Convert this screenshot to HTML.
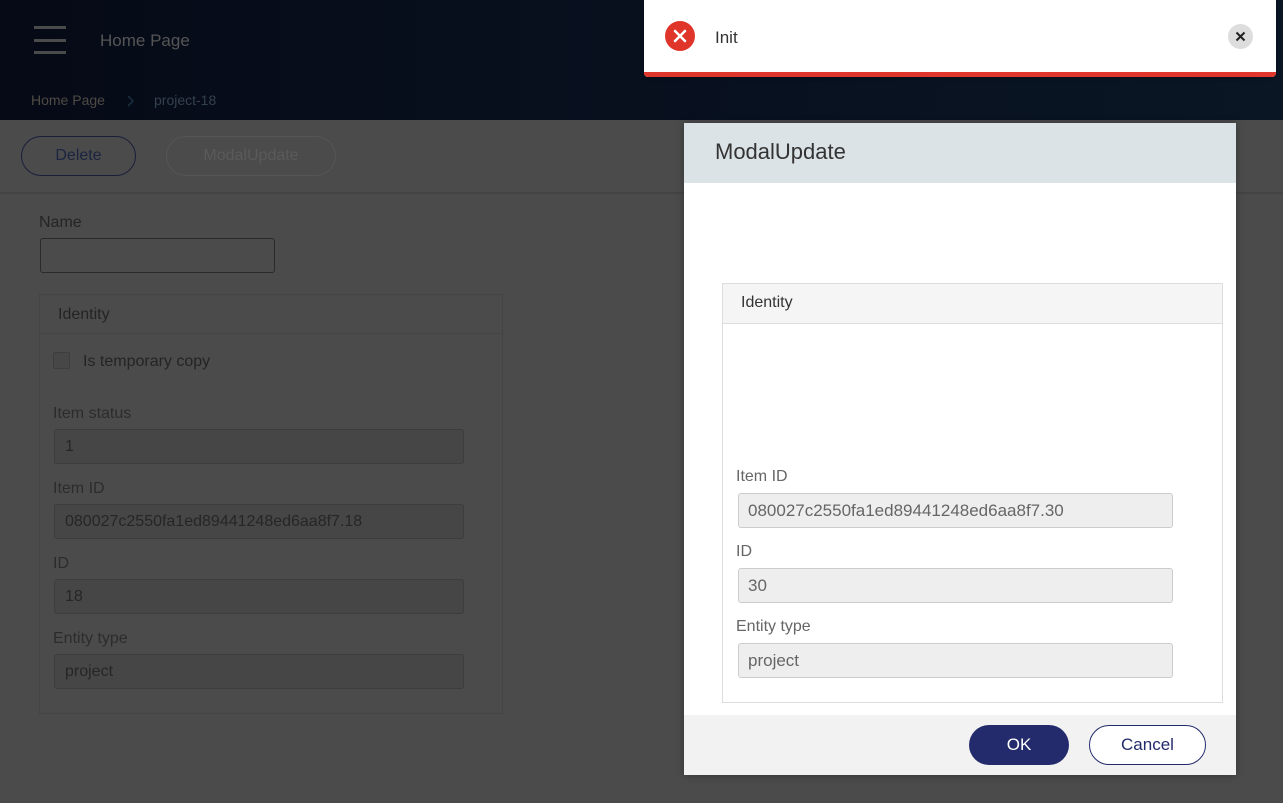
<!DOCTYPE html>
<html style="background:#4b4b4b"><head><meta charset="utf-8"><style>
*{box-sizing:border-box;margin:0;padding:0}
html,body{background:#4b4b4b}
body{width:1283px;height:803px;overflow:hidden;font-family:"Liberation Sans",sans-serif;position:relative}
.abs{position:absolute}
.hdr{left:0;top:0;width:1283px;height:120px;background:linear-gradient(90deg,#060a16,#081120 60%,#0a1624)}
.lbl{font-size:16px;color:#242424}
.inp{height:35px;border:1px solid #3d3d3d;border-radius:3px;background:#464646;font-size:16px;color:#262626;padding:8px 10px}
.m-lbl{font-size:16px;color:#666}
.m-inp{left:738px;width:435px;height:35px;border:1px solid #ccc;border-radius:3px;background:#eee;font-size:17px;color:#666;padding:7px 9px}
</style></head><body>
<div class="abs" style="left:0;top:0;width:1283px;height:803px;background:#4b4b4b"></div>
<div class="abs hdr"></div>
<div class="abs" style="left:34px;top:26px;width:32px;height:3px;background:#4a4a4a"></div>
<div class="abs" style="left:34px;top:39px;width:32px;height:3px;background:#4a4a4a"></div>
<div class="abs" style="left:34px;top:51px;width:32px;height:3px;background:#4a4a4a"></div>
<div class="abs" style="left:100px;top:31px;font-size:17px;color:#555">Home Page</div>
<div class="abs" style="left:31px;top:92px;font-size:14px;color:#4f4a44">Home Page</div>
<svg class="abs" style="left:125px;top:94px" width="10" height="14"><path d="M3 2L8 7L3 12" stroke="#1d3344" stroke-width="1.3" fill="none"/></svg>
<div class="abs" style="left:154px;top:92px;font-size:14px;color:#33414d">project-18</div>

<div class="abs" style="left:21px;top:136px;width:115px;height:40px;border:1px solid #1a1f3a;border-radius:20px;font-size:16px;color:#1b2440;text-align:center;line-height:38px">Delete</div>
<div class="abs" style="left:166px;top:136px;width:170px;height:40px;border:1px solid #555;border-radius:20px;font-size:16px;color:#5a5a5a;text-align:center;line-height:38px">ModalUpdate</div>
<div class="abs" style="left:0;top:192px;width:1283px;height:2px;background:#444"></div>

<div class="abs lbl" style="left:39px;top:214px">Name</div>
<div class="abs inp" style="left:40px;top:238px;width:235px;background:#4b4b4b;border-color:#2a2a2a"></div>
<div class="abs" style="left:39px;top:294px;width:464px;height:420px;border:1px solid #444"></div>
<div class="abs" style="left:40px;top:333px;width:462px;height:1px;background:#444"></div>
<div class="abs lbl" style="left:58px;top:306px">Identity</div>
<div class="abs" style="left:53px;top:352px;width:17px;height:17px;border:1px solid #3d3d3d;border-radius:2px;background:#474747"></div>
<div class="abs lbl" style="left:83px;top:353px">Is temporary copy</div>
<div class="abs lbl" style="left:53px;top:405px;color:#2c2c2c">Item status</div>
<div class="abs inp" style="left:54px;top:429px;width:410px">1</div>
<div class="abs lbl" style="left:53px;top:480px;color:#2c2c2c">Item ID</div>
<div class="abs inp" style="left:54px;top:504px;width:410px">080027c2550fa1ed89441248ed6aa8f7.18</div>
<div class="abs lbl" style="left:53px;top:555px;color:#2c2c2c">ID</div>
<div class="abs inp" style="left:54px;top:579px;width:410px">18</div>
<div class="abs lbl" style="left:53px;top:630px;color:#2c2c2c">Entity type</div>
<div class="abs inp" style="left:54px;top:654px;width:410px">project</div>

<div class="abs" style="left:644px;top:0;width:632px;height:77px;background:#fff;border-radius:0 0 4px 4px;overflow:hidden;box-shadow:0 1px 4px rgba(0,0,0,.3)">
 <div class="abs" style="left:0;bottom:0;width:632px;height:5px;background:#e0352b"></div>
 <div class="abs" style="left:21px;top:21px;width:30px;height:30px;border-radius:50%;background:#e0352b"></div>
 <svg class="abs" style="left:21px;top:21px" width="30" height="30"><path d="M10 10L20 20M20 10L10 20" stroke="#fff" stroke-width="2.6" stroke-linecap="round"/></svg>
 <div class="abs" style="left:71px;top:28px;font-size:17px;color:#333">Init</div>
 <div class="abs" style="left:584px;top:24px;width:25px;height:25px;border-radius:50%;background:#ddd"></div>
 <svg class="abs" style="left:584px;top:24px" width="25" height="25"><path d="M8.5 8.5L16.5 16.5M16.5 8.5L8.5 16.5" stroke="#222" stroke-width="2"/></svg>
</div>

<div class="abs" style="left:684px;top:123px;width:552px;height:652px;background:#fff;box-shadow:0 0 8px rgba(0,0,0,.3)">
 <div class="abs" style="left:0;top:0;width:552px;height:60px;background:#dce3e6"></div>
 <div class="abs" style="left:31px;top:16px;font-size:22px;color:#333">ModalUpdate</div>
 <div class="abs" style="left:38px;top:160px;width:501px;height:420px;border:1px solid #ddd"></div>
 <div class="abs" style="left:39px;top:161px;width:499px;height:40px;background:#f5f5f5;border-bottom:1px solid #ddd"></div>
 <div class="abs" style="left:57px;top:171px;font-size:16px;color:#333">Identity</div>
 <div class="abs" style="left:0;top:592px;width:552px;height:60px;background:#f2f2f2"></div>
 <div class="abs" style="left:285px;top:602px;width:100px;height:40px;border-radius:20px;background:#232b6c;color:#fff;font-size:17px;text-align:center;line-height:40px">OK</div>
 <div class="abs" style="left:405px;top:602px;width:117px;height:40px;border-radius:20px;border:1px solid #232b6c;background:#fff;color:#232b6c;font-size:17px;text-align:center;line-height:38px">Cancel</div>
</div>
<div class="abs m-lbl" style="left:736px;top:468px">Item ID</div>
<div class="abs m-inp" style="top:493px">080027c2550fa1ed89441248ed6aa8f7.30</div>
<div class="abs m-lbl" style="left:736px;top:543px">ID</div>
<div class="abs m-inp" style="top:568px">30</div>
<div class="abs m-lbl" style="left:736px;top:618px">Entity type</div>
<div class="abs m-inp" style="top:643px">project</div>
</body></html>
